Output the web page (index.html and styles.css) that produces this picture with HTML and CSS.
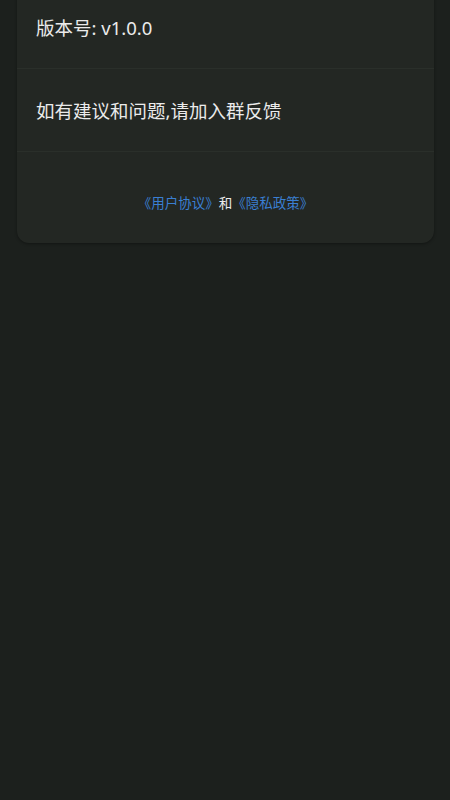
FILE: index.html
```html
<!DOCTYPE html>
<html lang="zh">
<head>
<meta charset="utf-8">
<meta name="viewport" content="width=450">
<title>关于</title>
<link rel="stylesheet" href="styles.css">
</head>
<body>
<main class="page">
  <section class="card">
    <div class="row">版本号: v1.0.0</div>
    <div class="row">如有建议和问题,请加入群反馈</div>
    <div class="links">
      <a class="link" href="#">《用户协议》</a><span class="and">和</span><a class="link" href="#">《隐私政策》</a>
    </div>
  </section>
</main>
</body>
</html>
```
FILE: styles.css
```css
html, body {
  margin: 0;
  padding: 0;
  background: #1c201d;
  height: 100%;
}
body {
  font-family: "Noto Sans", "Noto Sans CJK SC", sans-serif;
  color: #ebebeb;
  overflow: hidden;
}
.page {
  padding: 0 16px 0 17px;
}
.card {
  margin-top: -14px;
  background: #232723;
  border-radius: 12px;
  box-shadow: 0 1px 3px rgba(0, 0, 0, 0.35);
  overflow: hidden;
}
.row {
  height: 82px;
  display: flex;
  align-items: center;
  padding: 0 19px;
  font-size: 18.5px;
  border-bottom: 1px solid #2a2f2a;
}
.links {
  padding: 41px 0 30px;
  line-height: 20px;
  text-align: center;
  font-size: 13.5px;
}
.link {
  color: #3a7fd2;
  text-decoration: none;
}
.and {
  color: #ebebeb;
}
```
